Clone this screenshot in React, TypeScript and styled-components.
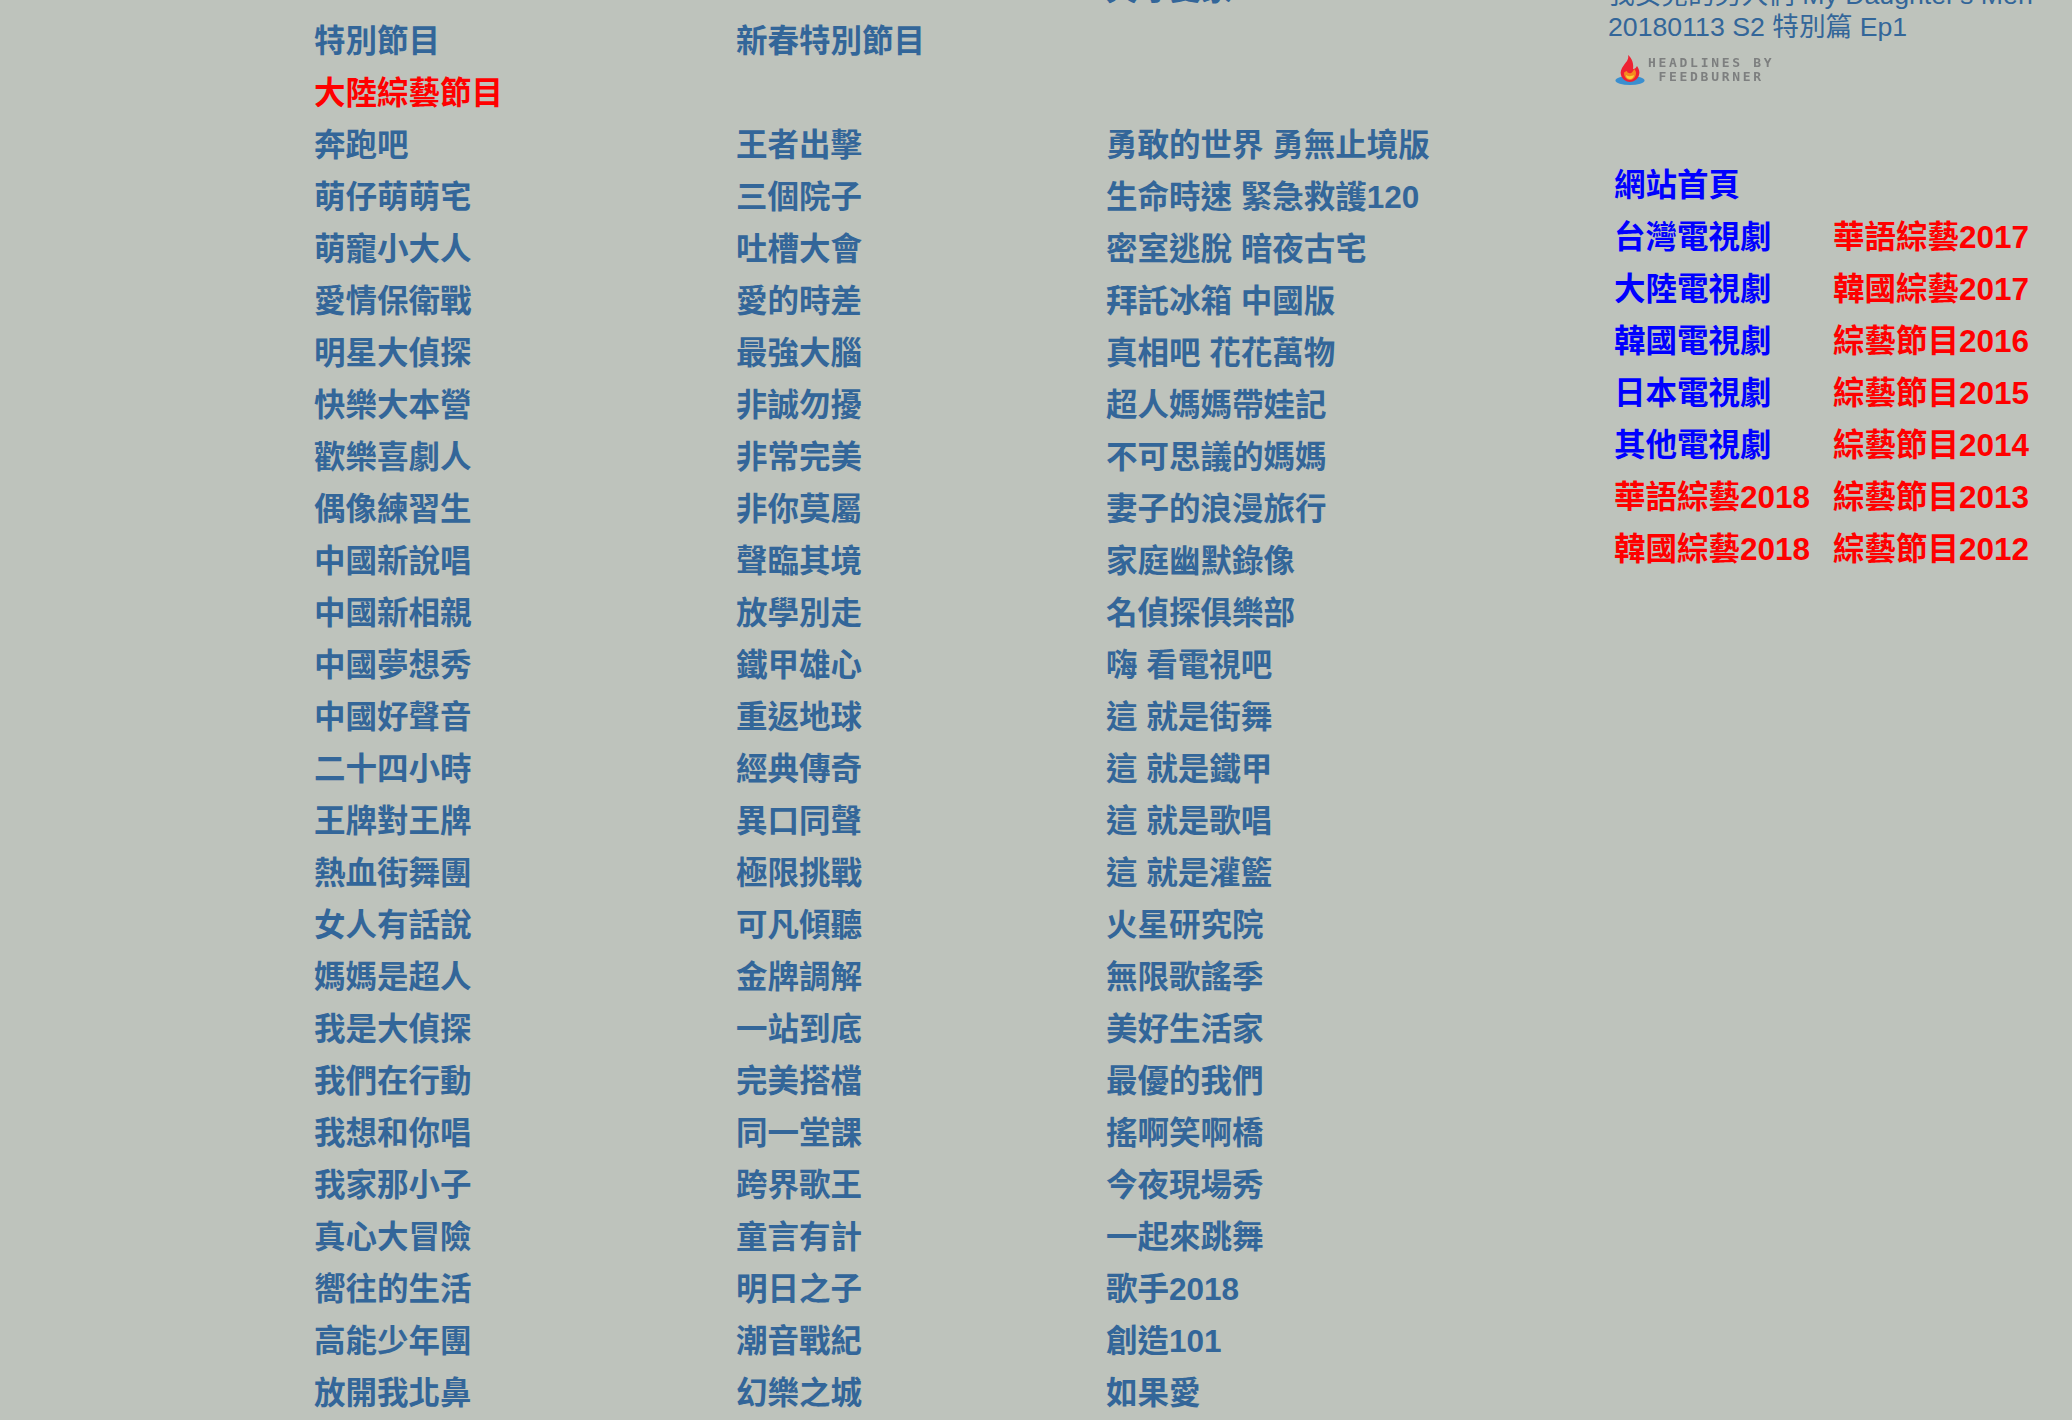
import React from 'react';
import styled, { createGlobalStyle } from 'styled-components';

const Global = createGlobalStyle`
  html, body { margin: 0; padding: 0; background: #bec3bc; height: 100%; overflow: hidden; }
`;

const Page = styled.div`
  height: 1420px;
  overflow: hidden;
  display: flex;
  align-items: flex-start;
  padding-left: 314px;
  font-family: "Liberation Sans", "Noto Sans CJK TC", sans-serif;
`;

const Listing = styled.div`
  display: grid;
  grid-template-columns: 422px 370px 502px;
  grid-auto-rows: 52px;
  margin-top: -37px;
  flex: none;
`;

const Cell = styled.div<{ $red?: boolean }>`
  font-size: 31.5px;
  line-height: 52px;
  font-weight: 700;
  white-space: nowrap;
  color: ${(p) => (p.$red ? '#ff0000' : '#336699')};
`;

const Side = styled.div`
  flex: none;
  width: 440px;
  margin-top: -21px;
`;

const Feed = styled.div`
  font-size: 26.7px;
  line-height: 32px;
  color: #336699;
  white-space: nowrap;
`;

const Badge = styled.div`
  display: flex;
  align-items: center;
  gap: 3px;
  margin: 9px 0 0 7px;
  height: 36px;
`;

const BadgeText = styled.div`
  font-family: "DejaVu Sans Mono", monospace;
  font-size: 13px;
  font-weight: 700;
  line-height: 14px;
  letter-spacing: 2.7px;
  color: #7d7f7f;
  text-align: center;
  white-space: pre;
  filter: blur(0.4px);
`;

const Nav = styled.div`
  display: grid;
  grid-template-columns: 219px 220px;
  grid-auto-rows: 52px;
  margin: 71px 0 0 6px;
`;

const NavItem = styled.div<{ $red?: boolean }>`
  font-size: 31.5px;
  line-height: 52px;
  font-weight: 700;
  white-space: nowrap;
  color: ${(p) => (p.$red ? '#ff0000' : '#0000ff')};
`;

const rows: [string, string, string][] = [
  ['', '', '天才夏家'],
  ['特別節目', '新春特別節目', ''],
  ['大陸綜藝節目', '', ''],
  ['奔跑吧', '王者出擊', '勇敢的世界 勇無止境版'],
  ['萌仔萌萌宅', '三個院子', '生命時速 緊急救護120'],
  ['萌寵小大人', '吐槽大會', '密室逃脫 暗夜古宅'],
  ['愛情保衛戰', '愛的時差', '拜託冰箱 中國版'],
  ['明星大偵探', '最強大腦', '真相吧 花花萬物'],
  ['快樂大本營', '非誠勿擾', '超人媽媽帶娃記'],
  ['歡樂喜劇人', '非常完美', '不可思議的媽媽'],
  ['偶像練習生', '非你莫屬', '妻子的浪漫旅行'],
  ['中國新說唱', '聲臨其境', '家庭幽默錄像'],
  ['中國新相親', '放學別走', '名偵探俱樂部'],
  ['中國夢想秀', '鐵甲雄心', '嗨 看電視吧'],
  ['中國好聲音', '重返地球', '這 就是街舞'],
  ['二十四小時', '經典傳奇', '這 就是鐵甲'],
  ['王牌對王牌', '異口同聲', '這 就是歌唱'],
  ['熱血街舞團', '極限挑戰', '這 就是灌籃'],
  ['女人有話說', '可凡傾聽', '火星研究院'],
  ['媽媽是超人', '金牌調解', '無限歌謠季'],
  ['我是大偵探', '一站到底', '美好生活家'],
  ['我們在行動', '完美搭檔', '最優的我們'],
  ['我想和你唱', '同一堂課', '搖啊笑啊橋'],
  ['我家那小子', '跨界歌王', '今夜現場秀'],
  ['真心大冒險', '童言有計', '一起來跳舞'],
  ['嚮往的生活', '明日之子', '歌手2018'],
  ['高能少年團', '潮音戰紀', '創造101'],
  ['放開我北鼻', '幻樂之城', '如果愛'],
];

const nav: [string, boolean, string, boolean][] = [
  ['網站首頁', false, '', false],
  ['台灣電視劇', false, '華語綜藝2017', true],
  ['大陸電視劇', false, '韓國綜藝2017', true],
  ['韓國電視劇', false, '綜藝節目2016', true],
  ['日本電視劇', false, '綜藝節目2015', true],
  ['其他電視劇', false, '綜藝節目2014', true],
  ['華語綜藝2018', true, '綜藝節目2013', true],
  ['韓國綜藝2018', true, '綜藝節目2012', true],
];

const Flame = () => (
  <svg width="30" height="32" viewBox="0 0 30 32" aria-hidden="true">
    <ellipse cx="15" cy="26.5" rx="14.5" ry="4.5" fill="#3a8fd0" />
    <path d="M13 1c1 4-1 6-4 10-3 4-4 7-3 10 1 4 5 7 9 7s8-3 9-7c1-3 0-6-2-9-1 2-2 3-4 3 1-5-1-11-5-14z" fill="#ee2233" />
    <path d="M9 19c0 4 3 7 6 7s6-3 6-7c0-2-1-3-2-4-1 3-3 5-5 4-1 0-2-1-2-2-1 0-3 1-3 2z" fill="#f58a1f" />
    <path d="M11 21c0 3 2 4 4 4s4-2 4-4c-2 1-5 2-8 0z" fill="#f7d23a" />
  </svg>
);

export default function App() {
  return (
    <Page>
      <Global />
      <Listing>
        {rows.map((r, i) =>
          r.map((t, j) => (
            <Cell key={`${i}-${j}`} $red={t === '大陸綜藝節目'}>
              {t}
            </Cell>
          )),
        )}
      </Listing>
      <Side>
        <Feed>我女兒的男人們 My Daughter's Men</Feed>
        <Feed>20180113 S2 特別篇 Ep1</Feed>
        <Badge>
          <Flame />
          <BadgeText>{'HEADLINES BY\nFEEDBURNER'}</BadgeText>
        </Badge>
        <Nav>
          {nav.map((n, i) => (
            <React.Fragment key={i}>
              <NavItem $red={n[1]}>{n[0]}</NavItem>
              <NavItem $red={n[3]}>{n[2]}</NavItem>
            </React.Fragment>
          ))}
        </Nav>
      </Side>
    </Page>
  );
}
